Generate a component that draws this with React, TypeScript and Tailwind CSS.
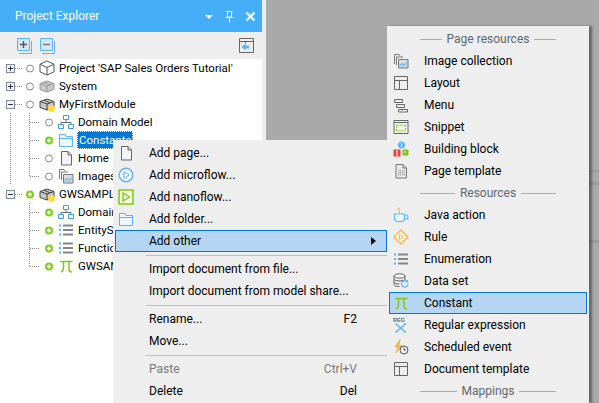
import type { ReactNode } from 'react'

const GRAY = '#6b6b6b'
const BLUE = '#5bb2f5'
const GREEN = '#86c61a'

// ---- drawn icons, all on a 16x16 grid ----
function Ico({ children }: { children: ReactNode }) {
  return (
    <svg width="16" height="16" viewBox="0 0 16 16" fill="none" className="shrink-0">
      {children}
    </svg>
  )
}

const CubeIcon = () => (
  <Ico>
    <path d="M8 1 15 4.2V11.8L8 15 1 11.8V4.2Z M1 4.2 8 7.5 15 4.2 M8 7.5V15" stroke="#555" />
  </Ico>
)
const ModuleIcon = ({ dark, dot }: { dark?: boolean; dot?: boolean }) => (
  <Ico>
    <path d="M8 3 15 5.5V11.5L8 14 1 11.5V5.5Z" fill="#c9c9c9" stroke={dark ? '#444' : '#999'} />
    <path d="M1 5.5 8 8 15 5.5 M8 8V14" stroke={dark ? '#444' : '#999'} />
    <path d="M5 4.2 11 6.8" stroke={dark ? '#444' : '#999'} />
    {dot && <circle cx="12.5" cy="12.5" r="3.5" fill="#ffdc3c" />}
  </Ico>
)
const DomainIcon = () => (
  <Ico>
    <path d="M8 5.5V8.5 M3 11V8.5H13V11" stroke={GRAY} />
    <path d="M5.5 1.5h5v4h-5z M0.5 10.5h5v4h-5z M10.5 10.5h5v4h-5z" stroke="#3d9be9" fill="#fff" />
  </Ico>
)
const FolderIcon = () => (
  <Ico>
    <path d="M1.5 2.5H7L8 4.5H14.5V14.5H1.5Z M1.5 6.5H14.5" stroke={BLUE} fill="#eef7fe" />
  </Ico>
)
const PageIcon = () => (
  <Ico>
    <path d="M3.5 1.5H10L13.5 5V15H3.5Z M10 1.5V5H13.5" stroke="#666" fill="#f4f4f4" />
  </Ico>
)
const ImagesIcon = () => (
  <Ico>
    <path d="M1.5 11V1.5H6L7 3 M3.5 12V4H10" stroke="#777" />
    <path d="M5.5 6.5H15V15H5.5Z" stroke="#777" fill="#ddd" />
    <path d="M6.5 13 9 10.5 11 12 14 9.5" stroke={BLUE} />
    <path d="M6.5 10.5h8v3.5h-8z" fill={BLUE} fillOpacity=".25" />
  </Ico>
)
const ListIcon = () => (
  <Ico>
    <path d="M1 3.5h2 M1 8h2 M1 12.5h2" stroke={BLUE} strokeWidth="2" />
    <path d="M5 3.5h10 M5 8h10 M5 12.5h10" stroke="#858585" strokeWidth="2" />
  </Ico>
)
const PiIcon = () => (
  <Ico>
    <path d="M2 3.5H14.5 M5.5 3.5V9.5Q5.5 13 3 14 M11 3.5V11.5Q11 14 14 14" stroke={GREEN} strokeWidth="1.5" />
  </Ico>
)
const MicroflowIcon = () => (
  <Ico>
    <circle cx="8" cy="8" r="6.8" stroke={BLUE} strokeWidth="1.4" fill="#eef7fe" />
    <path d="M6 4.8 11.2 8 6 11.2Z" stroke={BLUE} fill="#fff" />
  </Ico>
)
const NanoflowIcon = () => (
  <Ico>
    <path d="M1 1h14v14H1z" stroke={GREEN} strokeWidth="1.6" fill="#f2f9e4" />
    <path d="M5 4 11.5 8 5 12Z" stroke={GREEN} strokeWidth="1.4" />
  </Ico>
)
const LayoutIcon = () => (
  <Ico>
    <path d="M1.5 1.5h13v13h-13z M1.5 5.5h13 M6.5 5.5v9" stroke="#666" />
  </Ico>
)
const MenuIcon = () => (
  <Ico>
    <path d="M1.5 2.5h8v3h-8z M3.5 7.5h8v3h-8z M5.5 12.5h9v2.5h-9z" stroke="#666" />
  </Ico>
)
const SnippetIcon = () => (
  <Ico>
    <path d="M1 1.5h14v13H1z M1 3.5h14" stroke="#666" fill="#f4f4f4" />
    <path d="M3.5 6h9v6h-9z" stroke={GREEN} strokeDasharray="2 1" fill="#eef6dc" />
  </Ico>
)
const BlockIcon = () => (
  <Ico>
    <circle cx="8.5" cy="4" r="3.5" fill={BLUE} />
    <rect x="0.5" y="8.5" width="7" height="7" fill="#e8413e" />
    <rect x="9.5" y="8.5" width="6" height="6" rx="1" fill="#7fc31c" />
    <path d="M8.5 2v4 M4 9v6 M11 11h2" stroke="#fff" />
  </Ico>
)
const TemplateIcon = () => (
  <Ico>
    <path d="M3 1.5H10L13.5 5V15H3Z M10 1.5V5H13.5" stroke="#777" fill="#e9e9e9" />
    <path d="M5 8h7 M5 10h7 M5 12h7 M7 7v6 M10 7v6" stroke="#999" strokeDasharray="1 1" />
  </Ico>
)
const JavaIcon = () => (
  <Ico>
    <path d="M6 0.5Q4.5 2 6 3.5T6 6" stroke="#f5a83a" />
    <path d="M1.5 7h10v4Q11.5 14.5 8 14.5H5Q1.5 14.5 1.5 11Z M11.5 8H13.5Q15 8 15 10T13 12H11.5" stroke={BLUE} strokeWidth="1.2" fill="#eef7fe" />
  </Ico>
)
const RuleIcon = () => (
  <Ico>
    <path d="M8 1 15 8 8 15 1 8Z" stroke="#f7b64c" strokeWidth="1.5" fill="#fef6e6" />
    <path d="M6.5 5.5 10.5 8 6.5 10.5Z" stroke="#f7b64c" />
  </Ico>
)
const DataSetIcon = () => (
  <Ico>
    <ellipse cx="6.5" cy="3" rx="5.5" ry="2.2" stroke="#666" />
    <path d="M1 3V11.5Q1 13.5 6.5 13.5 M12 3V6.5 M1 6Q1 8 6.5 8T12 6 M1 9Q1 11 6.5 11" stroke="#666" />
    <path d="M15 11a3.2 3.2 0 1 1-1-2.4 M14.6 7v2h-2" stroke={BLUE} strokeWidth="1.2" />
  </Ico>
)
const RegexIcon = () => (
  <svg width="16" height="16" viewBox="0 0 16 16" fill="none" className="shrink-0">
    <text x="0" y="5" fontSize="5.5" fontWeight="700" fill="#666" fontFamily="Liberation Sans, sans-serif">REG</text>
    <path d="M2.5 6.5 13 15.5 M13 6.5 2.5 15.5" stroke={BLUE} strokeWidth="1.5" />
  </svg>
)
const ScheduledIcon = () => (
  <Ico>
    <path d="M7 0.5 2 8H5.5L2.5 14 9 6.5H5.8Z" fill="#f9c25c" stroke="#f0a52f" strokeWidth=".8" />
    <circle cx="11" cy="11" r="4" fill="#eee" stroke="#555" />
    <path d="M11 8.8V11H13" stroke="#555" />
  </Ico>
)

// ---- project tree ----
function Guides({ depth, expander, last, through }: { depth: 0 | 1; expander?: '+' | '-'; last?: boolean; through?: boolean }) {
  const h = 18
  return (
    <svg width={depth === 0 ? 24 : 43} height={h} className="shrink-0" shapeRendering="crispEdges">
      {through && <line x1="10.5" y1="0" x2="10.5" y2={h} stroke="#888" strokeDasharray="1 1" />}
      {depth === 1 && (
        <>
          <line x1="29.5" y1="0" x2="29.5" y2={last ? 9 : h} stroke="#888" strokeDasharray="1 1" />
          <line x1="30" y1="9.5" x2="40" y2="9.5" stroke="#888" strokeDasharray="1 1" />
        </>
      )}
      {expander && (
        <>
          <line x1="15" y1="9.5" x2="22" y2="9.5" stroke="#888" strokeDasharray="1 1" />
          <rect x="6.5" y="5.5" width="8" height="8" fill="#f2f2f2" stroke="#7f8a9c" />
          <line x1="8" y1="9.5" x2="13" y2="9.5" stroke="#334" />
          {expander === '+' && <line x1="10.5" y1="7" x2="10.5" y2="12" stroke="#334" />}
        </>
      )}
    </svg>
  )
}

function StatusDot({ on }: { on?: boolean }) {
  return (
    <svg width="12" height="18" className="shrink-0">
      {on ? (
        <>
          <circle cx="6" cy="9.5" r="4" fill="#7fd01c" />
          <path d="M4 9.5h4 M6 7.5v4" stroke="#fff" strokeWidth="1.3" />
        </>
      ) : (
        <circle cx="6" cy="9.5" r="3.5" fill="#fff" stroke="#8a8a8a" />
      )}
    </svg>
  )
}

type TreeRow = {
  label: string
  icon: ReactNode
  depth: 0 | 1
  expander?: '+' | '-'
  on?: boolean
  last?: boolean
  through?: boolean
  selected?: boolean
}

const TREE: TreeRow[] = [
  { label: "Project 'SAP Sales Orders Tutorial'", icon: <CubeIcon />, depth: 0, expander: '+' },
  { label: 'System', icon: <ModuleIcon />, depth: 0, expander: '+' },
  { label: 'MyFirstModule', icon: <ModuleIcon dark dot />, depth: 0, expander: '-' },
  { label: 'Domain Model', icon: <DomainIcon />, depth: 1, through: true },
  { label: 'Constants', icon: <FolderIcon />, depth: 1, on: true, through: true, selected: true },
  { label: 'Home', icon: <PageIcon />, depth: 1, through: true },
  { label: 'Images', icon: <ImagesIcon />, depth: 1, last: true, through: true },
  { label: 'GWSAMPLE_BASIC', icon: <ModuleIcon dark dot />, depth: 0, expander: '-', on: true },
  { label: 'Domain Model', icon: <DomainIcon />, depth: 1, on: true },
  { label: 'EntitySets', icon: <ListIcon />, depth: 1, on: true },
  { label: 'FunctionImports', icon: <ListIcon />, depth: 1, on: true },
  { label: 'GWSAMPLE_BASIC_Location', icon: <PiIcon />, depth: 1, on: true, last: true },
]

function ProjectExplorer() {
  return (
    <aside className="flex h-full w-[266px] shrink-0 flex-col bg-[#eeeeee] pr-[4px]">
      <div className="flex h-[32px] shrink-0 items-center bg-[#45aef8] pl-[15px] text-white">
        <span className="flex-1">Project Explorer</span>
        <svg width="52" height="14" viewBox="0 0 52 14" className="mr-[5px] mt-[2px]" fill="none">
          <path d="M0 5H8L4 9Z" fill="#fff" />
          <path d="M21 1.5h7 M22.5 1.5V7h4V1.5 M20.5 7.5h8 M24.5 7.5V13" stroke="#fff" />
          <path d="M41.5 2.5 49.5 10.5 M49.5 2.5 41.5 10.5" stroke="#fff" strokeWidth="2.4" />
        </svg>
      </div>
      <div className="flex h-[27px] shrink-0 items-center bg-[#eeeeee] pl-[16px] pr-[8px]">
        <svg width="16" height="16" viewBox="0 0 16 16" fill="none">
          <path d="M1.5.5h12v12h-12z" fill="#d6e6f3" stroke={BLUE} />
          <path d="M15.5 3v12.5H3" stroke={BLUE} />
          <path d="M4 6.5h7 M7.5 3v7" stroke="#555" strokeWidth="1.4" />
        </svg>
        <svg width="16" height="16" viewBox="0 0 16 16" fill="none" className="ml-[7px]">
          <path d="M1.5.5h12v12h-12z" fill="#d6e6f3" stroke={BLUE} />
          <path d="M15.5 3v12.5H3" stroke={BLUE} />
          <path d="M4 6.5h7" stroke="#777" strokeWidth="1.4" />
        </svg>
        <svg width="15" height="15" viewBox="0 0 15 15" fill="none" className="ml-auto">
          <path d="M.5.5h14v14H.5z M.5 3.5h14 M6.5 3.5v2" stroke="#666" />
          <path d="M2.5 9 6.5 5.5V7.5H10V10.5H6.5V12.5Z" fill={BLUE} />
        </svg>
      </div>
      <div className="flex-1 overflow-hidden bg-white text-[11.5px] text-black">
        {TREE.map((row, i) => (
          <div key={i} className="flex h-[18px] items-center">
            <Guides depth={row.depth} expander={row.expander} last={row.last} through={row.through} />
            <StatusDot on={row.on} />
            <span className="ml-[3px]">{row.icon}</span>
            <span
              className={
                row.selected
                  ? 'ml-[3px] border border-dotted border-white bg-[#0078d7] px-px leading-[16px] text-white'
                  : 'ml-[4px] whitespace-nowrap leading-[16px]'
              }
            >
              {row.label}
            </span>
          </div>
        ))}
      </div>
    </aside>
  )
}

// ---- context menus ----
type MenuEntry = {
  label: string
  icon?: ReactNode
  shortcut?: string
  disabled?: boolean
  active?: boolean
  submenu?: boolean
}

function ContextItem({ item }: { item: MenuEntry }) {
  return (
    <div
      className={
        item.active
          ? 'flex h-[22px] items-center border border-[#0078d7] bg-[#b5d6f2]'
          : 'flex h-[22px] items-center border border-transparent'
      }
    >
      <span className="ml-[2px] w-[31px] shrink-0">{item.icon}</span>
      <span className={item.disabled ? 'flex-1 text-[#7a7a7a]' : 'flex-1'}>{item.label}</span>
      {item.shortcut && (
        <span className={item.disabled ? 'mr-[29px] text-[#7a7a7a]' : 'mr-[29px]'}>{item.shortcut}</span>
      )}
      {item.submenu && (
        <svg width="5" height="8" className="mr-[10px]">
          <path d="M0 0 5 4 0 8Z" fill="#000" />
        </svg>
      )}
    </div>
  )
}

const Sep = () => (
  <div className="flex h-[6px] items-center pl-[31px]">
    <div className="h-px flex-1 bg-[#bdbdbd]" />
  </div>
)

function PageMenu() {
  return (
    <div className="absolute left-[113px] top-[140px] h-[263px] w-[274px] overflow-hidden bg-[#eeeeee] pl-[2px] pt-[2px] text-black">
      <ContextItem item={{ label: 'Add page...', icon: <PageIcon /> }} />
      <ContextItem item={{ label: 'Add microflow...', icon: <MicroflowIcon /> }} />
      <ContextItem item={{ label: 'Add nanoflow...', icon: <NanoflowIcon /> }} />
      <ContextItem item={{ label: 'Add folder...', icon: <FolderIcon /> }} />
      <ContextItem item={{ label: 'Add other', active: true, submenu: true }} />
      <Sep />
      <ContextItem item={{ label: 'Import document from file...' }} />
      <ContextItem item={{ label: 'Import document from model share...' }} />
      <Sep />
      <ContextItem item={{ label: 'Rename...', shortcut: 'F2' }} />
      <ContextItem item={{ label: 'Move...' }} />
      <Sep />
      <ContextItem item={{ label: 'Paste', shortcut: 'Ctrl+V', disabled: true }} />
      <ContextItem item={{ label: 'Delete', shortcut: 'Del' }} />
    </div>
  )
}

function GroupHeading({ label }: { label: string }) {
  return (
    <div className="flex h-[22px] items-center gap-[5px] px-[31px] text-[#5d6870]">
      <div className="h-px flex-1 bg-[#aaaaaa]" />
      <span>{label}</span>
      <div className="h-px flex-1 bg-[#aaaaaa]" />
    </div>
  )
}

function OtherItem({ label, icon, active }: { label: string; icon: ReactNode; active?: boolean }) {
  return (
    <div
      className={
        active
          ? 'flex h-[22px] items-center border border-[#0078d7] bg-[#b5d6f2]'
          : 'flex h-[22px] items-center border border-transparent'
      }
    >
      <span className="ml-[3px] w-[31px] shrink-0">{icon}</span>
      <span>{label}</span>
    </div>
  )
}

function OtherMenu() {
  return (
    <div className="absolute left-[387px] top-[26px] h-[377px] w-[202px] overflow-hidden bg-[#eeeeee] px-[2px] pt-[2px] text-black shadow-[3px_0_2px_rgba(0,0,0,0.4)]">
      <GroupHeading label="Page resources" />
      <OtherItem label="Image collection" icon={<ImagesIcon />} />
      <OtherItem label="Layout" icon={<LayoutIcon />} />
      <OtherItem label="Menu" icon={<MenuIcon />} />
      <OtherItem label="Snippet" icon={<SnippetIcon />} />
      <OtherItem label="Building block" icon={<BlockIcon />} />
      <OtherItem label="Page template" icon={<TemplateIcon />} />
      <GroupHeading label="Resources" />
      <OtherItem label="Java action" icon={<JavaIcon />} />
      <OtherItem label="Rule" icon={<RuleIcon />} />
      <OtherItem label="Enumeration" icon={<ListIcon />} />
      <OtherItem label="Data set" icon={<DataSetIcon />} />
      <OtherItem label="Constant" icon={<PiIcon />} active />
      <OtherItem label="Regular expression" icon={<RegexIcon />} />
      <OtherItem label="Scheduled event" icon={<ScheduledIcon />} />
      <OtherItem label="Document template" icon={<LayoutIcon />} />
      <GroupHeading label="Mappings" />
    </div>
  )
}

export default function App() {
  return (
    <div className="relative flex h-[403px] w-[599px] overflow-hidden bg-[#a9a9a9] font-['Roboto',sans-serif] text-[12px]">
      <ProjectExplorer />
      <main className="flex-1 pt-[170px]">
        <div className="h-[2px] bg-[#9c9c9c]" />
        <div className="mt-[10px] h-[3px] bg-[#9c9c9c]" />
        <div className="mt-[55px] h-[3px] bg-[#9c9c9c]" />
      </main>
      <PageMenu />
      <OtherMenu />
    </div>
  )
}
